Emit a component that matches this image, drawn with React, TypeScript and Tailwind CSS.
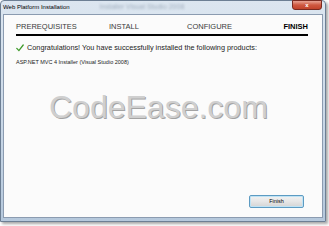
const TABS = [
  { label: 'PREREQUISITES', width: 'w-[93px]', active: false },
  { label: 'INSTALL', width: 'w-[78px]', active: false },
  { label: 'CONFIGURE', width: 'flex-1', active: false },
  { label: 'FINISH', width: '', active: true },
]

function CheckMark() {
  return (
    <svg width="8" height="8" viewBox="0 0 8 8" className="shrink-0">
      <path d="M0.8 4.4 L2.9 6.6 L7.2 1" fill="none" stroke="#3f9a2b" strokeWidth="1.3" strokeLinecap="round" />
    </svg>
  )
}

export default function App() {
  return (
    <div className="w-[329px] h-[226px] bg-white overflow-hidden" style={{ fontFamily: '"Liberation Sans", Arial, sans-serif' }}>
      {/* Window */}
      <div className="relative w-[326px] h-[222px] flex flex-col rounded-t-[4px] border border-[#6d7f94] bg-gradient-to-b from-[#dce6f0] via-[#cbd9e8] to-[#b5c8dc] shadow-[2px_2px_3px_rgba(0,0,0,0.35)]">
        {/* Title bar */}
        <div className="h-[13px] flex items-center px-[2px] text-[6px] text-black relative">
          <span>Web Platform Installation</span>
          <span className="ml-[30px] text-[7px] text-[#a4b1c0] blur-[1px]">Installer Visual Studio 2008</span>
        </div>
        {/* Close button */}
        <div className="absolute top-[-1px] right-[3px] w-[30px] h-[10px] rounded-b-[3px] border border-[#7a2a20] bg-gradient-to-b from-[#e8a293] via-[#cf5840] to-[#c2432b] flex items-center justify-center text-white text-[6px] font-bold leading-none">
          x
        </div>

        {/* Content */}
        <div className="flex-1 mx-[2px] mb-[3px] border border-[#8b9bb0] bg-[#fbfbfb] flex flex-col">
          <div className="pl-[12px] pr-[14px] pt-[8px]">
            <div className="flex items-end text-[7.5px] text-[#3a3a3a] leading-none pb-[3px] border-b-2 border-black">
              {TABS.map((t) => (
                <span key={t.label} className={`${t.width} ${t.active ? 'font-bold text-black' : ''}`}>
                  {t.label}
                </span>
              ))}
            </div>
          </div>

          <div className="pl-[12px] pt-[8px] flex items-center gap-[3px] text-[7.3px] text-[#222] leading-none">
            <CheckMark />
            <span>Congratulations! You have successfully installed the following products:</span>
          </div>
          <div className="pl-[12px] pt-[8px] text-[5.5px] text-[#222] leading-none">
            ASP.NET MVC 4 Installer (Visual Studio 2008)
          </div>

          <div className="pl-[45px] pt-[26px] text-[32px] leading-none text-[#cfcfcf] [text-shadow:1px_1px_0_#a3a3a3]">
            CodeEase.com
          </div>

          <div className="flex-1" />
          <div className="flex justify-end pr-[18px] pb-[9px]">
            <div className="w-[55px] h-[13px] rounded-[2px] border border-[#5d9bc2] bg-gradient-to-b from-[#f2f2f2] via-[#e6e6e6] to-[#d4d4d4] shadow-[inset_0_0_0_1px_#bfe3f5] flex items-center justify-center text-[5.5px] text-black">
              Finish
            </div>
          </div>
        </div>
      </div>
    </div>
  )
}
